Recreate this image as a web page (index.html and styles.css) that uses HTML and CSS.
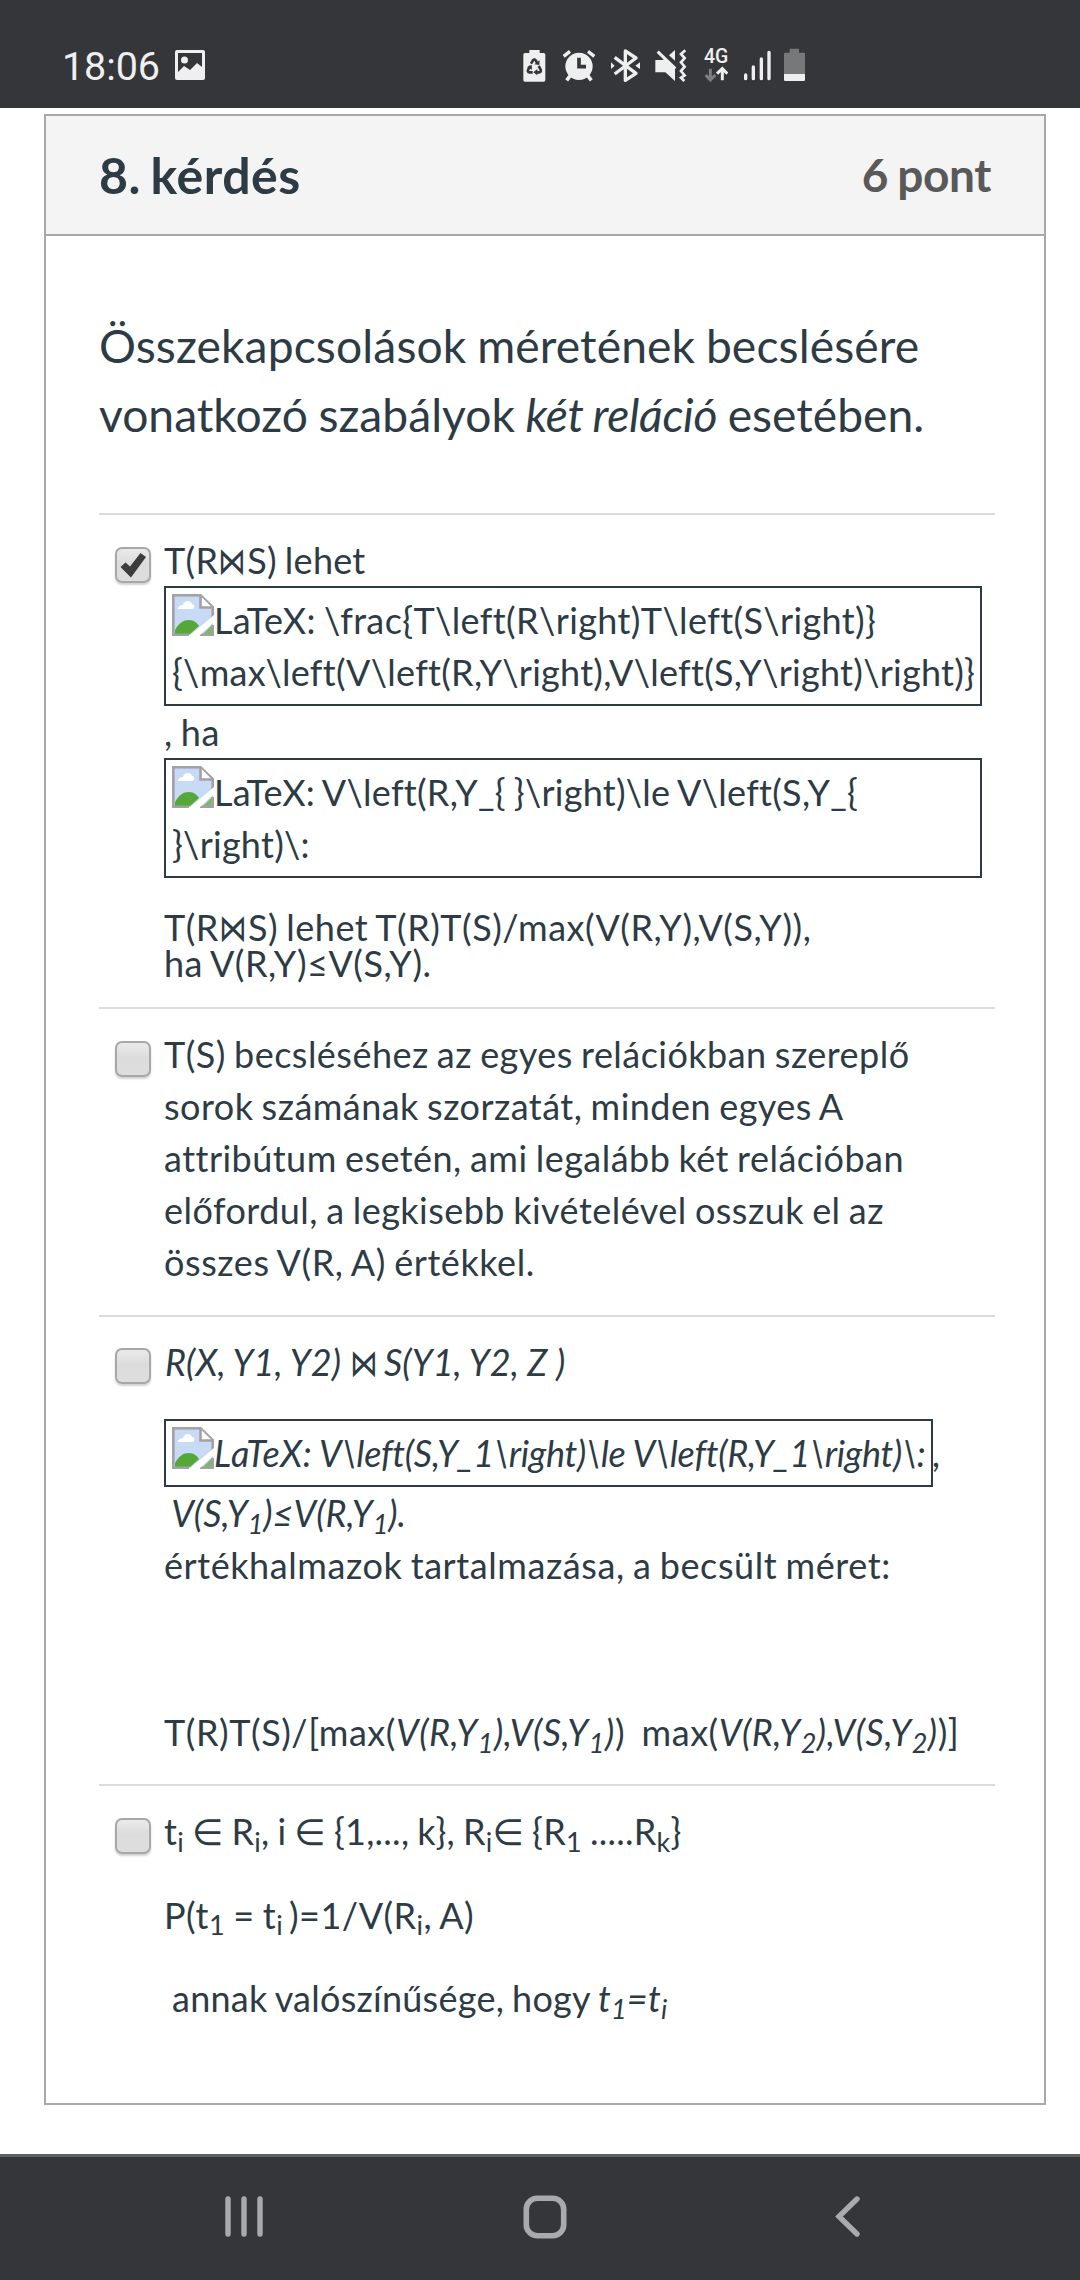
FILE: index.html
```html
<!DOCTYPE html>
<html lang="hu">
<head>
<meta charset="utf-8">
<title>8. kérdés</title>
<link rel="stylesheet" href="styles.css">
</head>
<body>
<svg class="defs" width="0" height="0" aria-hidden="true">
  <symbol id="broken" viewBox="0 0 42 42">
    <path d="M1 1H29L41 13V41H1Z" fill="#c6d7f3"/>
    <path d="M3 4H28V14H39V22L14 39H3Z" fill="#c9daf6"/>
    <path d="M6 15c0-3 3-4 5-4 1-5 8-5 9-1 3 0 3 5 0 5Z" fill="#fff"/>
    <path d="M3 39V36C7 29 11 26 17 26c5 0 8 3 10 6L18 40H3Z" fill="#54a838"/>
    <path d="M30 41L40 31V41Z" fill="#7cb868"/>
    <path d="M1.3 41V1.3H28.5L40.7 13V25" fill="none" stroke="#a2a2a2" stroke-width="2.6"/>
    <path d="M28.5 2V13.5H40" fill="#fff" stroke="#a2a2a2" stroke-width="2.6"/>
    <path d="M0 40.7H17M28 40.7H40.7V31" fill="none" stroke="#a2a2a2" stroke-width="2.6"/>
    <path d="M42 21V28L27 42H17Z" fill="#fff"/>
  </symbol>
</svg>

<header class="status">
  <span class="clock">18:06</span>
  <svg class="photo" width="32" height="32" viewBox="0 0 32 32"><path fill="#efeff0" fill-rule="evenodd" d="M3 1H29a2 2 0 0 1 2 2V29a2 2 0 0 1-2 2H3a2 2 0 0 1-2-2V3a2 2 0 0 1 2-2ZM4 4V23L10 17L16 21L23 14L28 18V4Z"/><circle cx="10.500" cy="11" r="3.500" fill="#efeff0"/></svg>
  <div class="indicators">
    <svg width="24" height="36" viewBox="69 84 72 108"><path fill="#efeff0" d="M88 90h31v9h12q5 0 5 5v76q0 5-5 5H75q-5 0-5-5v-76q0-5 5-5h13Z"/><g fill="none" stroke="#353639" stroke-width="8"><path d="M93 131L99 121Q103 116 107 121L112 130"/><path d="M116 138L122 149Q124 156 117 157H107"/><path d="M98 157H89Q81 156 85 148L91 138"/></g><path fill="#353639" d="M103 133l15 2 1-14ZM112 147v19l-12-9ZM81 142l14-8 1 15Z"/></svg>
    <svg width="36" height="36" viewBox="183 84 108 108"><circle cx="237" cy="139" r="41" fill="#efeff0"/><path d="M191 109L210 94M283 109L264 94" stroke="#efeff0" stroke-width="10"/><path d="M211 167L200 181M263 167L274 181" stroke="#efeff0" stroke-width="11"/><path d="M237 113V140H258" fill="none" stroke="#353639" stroke-width="11"/></svg>
    <svg width="33" height="36" viewBox="327 84 99 108"><path fill="none" stroke="#efeff0" stroke-width="10" stroke-linejoin="round" d="M344 112L408 160L376 181V93L408 114L344 162"/><path fill="#efeff0" d="M333 127l11 10-11 10ZM420 127l-14 10 14 10Z"/></svg>
    <svg width="35" height="36" viewBox="462 84 105 108"><path fill="#efeff0" d="M466 120h20l10-3 29 27v39l-29-26h-30ZM507 106L525 90V122Z"/><path stroke="#efeff0" stroke-width="9" d="M473 95L526 146"/><path fill="none" stroke="#efeff0" stroke-width="8" d="M556 91L543 102L554 114L543 127L554 140L543 153L554 166L543 173L553 183"/></svg>
    <div class="net"><span>4G</span><svg width="24" height="17" viewBox="612 140 72 51"><path fill="none" stroke="#7d7e80" stroke-width="9" d="M631 148V182M617 167L631 182L646 167"/><path fill="none" stroke="#efeff0" stroke-width="9" d="M667 183V149M651 163L667 148L682 163"/></svg></div>
    <svg width="29" height="36" viewBox="726 84 87 108"><path stroke="#efeff0" stroke-width="10" stroke-linecap="round" d="M734 165V176M757 141V176M781 117V176M804 97V176"/></svg>
    <svg width="21" height="36" viewBox="852 84 63 108"><path fill="#77787a" d="M869 86h28v12h15q3 0 3 4v60H852V102q0-4 4-4h13Z"/><path fill="#efeff0" d="M852 162h63v17q0 4-4 4H856q-4 0-4-4Z"/></svg>
  </div>
</header>

<main class="page">
  <section class="card">
    <div class="card-head"><h1>8. kérdés</h1><span class="points">6 pont</span></div>
    <div class="card-body">
      <p class="question">Összekapcsolások méretének becslésére<br><span class="second">vonatkozó szabályok <i>két reláció</i> esetében.</span></p>

      <div class="answer">
        <span class="check"><svg width="36" height="36" viewBox="0 0 36 36"><path fill="#3c3c3c" d="M5.500 20L10.500 15.500L15 19.500L25.500 6L31 10L16 30.500Z"/></svg></span>
        <div class="text">
          <p class="snug">T(R<span class="join">⋈</span>S) lehet</p>
          <div class="alt"><svg class="broken"><use href="#broken"/></svg><span class="fraction">LaTeX: \frac{T\left(R\right)T\left(S\right)}</span><br><span class="snug">{\max\left(V\left(R,Y\right),V\left(S,Y\right)\right)}</span></div>
          <p>, ha</p>
          <div class="alt snug"><svg class="broken"><use href="#broken"/></svg>LaTeX: V\left(R,Y_{ }\right)\le V\left(S,Y_{<br>}\right)\:</div>
          <p class="tight">T(R<span class="join">⋈</span>S) lehet T(R)T(S)/max(V(R,Y),V(S,Y)),<br>ha V(R,Y)≤V(S,Y).</p>
        </div>
      </div>

      <div class="answer plain">
        <span class="check"></span>
        <div class="text">
          <p>T(S) becsléséhez az egyes relációkban szereplő<br>sorok számának szorzatát, minden egyes A<br>attribútum esetén, ami legalább két relációban<br>előfordul, a legkisebb kivételével osszuk el az<br><span class="wide">összes V(R, A) értékkel.</span></p>
        </div>
      </div>

      <div class="answer relations">
        <span class="check"></span>
        <div class="text">
          <p class="schema"><i>R(X, Y1, Y2) </i><span class="join">⋈</span><i> S(Y1, Y2, Z )</i></p>
          <div class="formula"><div class="alt single"><svg class="broken"><use href="#broken"/></svg><span class="wide">LaTeX:</span> V\left(S,Y_1\right)\le V\left(R,Y_1\right)\:</div><i>,</i></div>
          <p class="natural"><i>&nbsp;V(S,Y<sub>1</sub>)≤V(R,Y<sub>1</sub>).</i></p>
          <p class="wide">értékhalmazok tartalmazása, a becsült méret:</p>
          <p class="estimate">T(R)T(S)/[max(<i>V(R,Y<sub>1</sub>),V(S,Y<sub>1</sub>)</i>)&nbsp; max(<i>V(R,Y<sub>2</sub>),V(S,Y<sub>2</sub>)</i>)]</p>
        </div>
      </div>

      <div class="answer probability">
        <span class="check"></span>
        <div class="text">
          <p class="snug">t<sub>i</sub> ∈ R<sub>i</sub>, i ∈ {1,..., k}, R<sub>i</sub>∈ {R<sub>1</sub> .....R<sub>k</sub>}</p>
          <p>P(t<sub>1</sub> = t<sub>i </sub>)=1/V(R<sub>i</sub>, A)</p>
          <p class="snug">&nbsp;annak valószínűsége, hogy <i>t<sub>1</sub>=t<sub>i</sub></i></p>
        </div>
      </div>
    </div>
  </section>
</main>

<nav class="navbar">
  <svg width="38" height="44" viewBox="0 0 38 44"><path d="M3 4V39M19 4V39M35 4V39" stroke="#a9aaac" stroke-width="5.400" stroke-linecap="round"/></svg>
  <svg class="home" width="44" height="44" viewBox="0 0 44 44"><rect x="3.300" y="3.300" width="37.400" height="37.400" rx="11" fill="none" stroke="#a9aaac" stroke-width="5.600"/></svg>
  <svg width="26" height="44" viewBox="0 0 26 44"><path d="M22 4L4 21.500L22 39" fill="none" stroke="#a9aaac" stroke-width="5.400" stroke-linecap="round"/></svg>
</nav>
</body>
</html>
```
FILE: styles.css
```css
* { box-sizing: border-box; }
body {
  margin: 0;
  width: 1080px;
  height: 2280px;
  display: flex;
  flex-direction: column;
  overflow: hidden;
  background: #fff;
  color: #2d3b45;
  font-family: Lato, "DejaVu Sans", sans-serif;
}
h1, p { margin: 0; font-weight: inherit; }
svg { display: block; flex: none; }
.defs { position: absolute; }

.status {
  display: flex;
  align-items: flex-start;
  height: 108px;
  flex: none;
  padding-left: 62px;
  background: #353639;
  color: #efeff0;
  font-family: Roboto, sans-serif;
}
.clock { width: 112px; padding-top: 43px; font-size: 39.500px; line-height: 47px; letter-spacing: -.1px; white-space: nowrap; }
.photo { margin-top: 49px; }
.indicators { display: flex; gap: 12px; margin: 48px 0 0 317px; }
.indicators svg:first-child { margin-right: 2px; }
.net { width: 27px; margin: 0 1px 0 2px; padding-left: 1px; }
.net span { display: block; height: 18px; font-size: 19.500px; line-height: 18px; font-weight: 500; }

.page { flex: 1; padding: 6px 34px 0 44px; }
.card { height: 1991px; border: 2px solid #a7a8a9; }
.card-head {
  display: flex;
  justify-content: space-between;
  align-items: center;
  height: 120px;
  padding: 0 53px;
  background: #f4f4f4;
  border-bottom: 2px solid #a7a8a9;
  font-weight: 700;
}
.card-head h1 { font-size: 50px; line-height: 60px; letter-spacing: .5px; word-spacing: -3px; }
.points { color: #595959; font-size: 46px; line-height: 56px; letter-spacing: -.4px; word-spacing: -1.500px; }
.card-body { padding: 75px 49px 0 53px; }
.question {
  height: 202px;
  font-size: 46.200px;
  line-height: 69.300px;
  letter-spacing: .12px;
  word-spacing: -1.200px;
  white-space: nowrap;
}
.second { letter-spacing: 0; }
.second i { letter-spacing: -.3px; word-spacing: -1.500px; }

.answer { display: flex; height: 494px; padding-top: 19px; border-top: 2px solid #dcdcdc; }
.answer.plain { height: 308px; }
.answer.relations { height: 469px; }
.answer.probability { height: 317px; }
.check {
  flex: none;
  width: 36px;
  height: 36px;
  margin: 13px 13px 0 16px;
  border-radius: 7px;
  background: linear-gradient(#ececec, #dcdcdc 45%, #dedede);
  box-shadow: inset 0 0 0 2px #a8a8a8, 0 2px 2px rgba(0, 0, 0, .18);
}
.relations .check { margin-top: 12px; }
.text { font-size: 36px; line-height: 52px; letter-spacing: .47px; word-spacing: -1.500px; white-space: nowrap; }
.snug { letter-spacing: .26px; }
.fraction { letter-spacing: .38px; }
.wide { letter-spacing: .58px; }
.natural { letter-spacing: 0; word-spacing: 0; }
.alt { width: 818px; height: 120px; padding: 6px; border: 2px solid #2d3b45; }
.broken { display: inline-block; width: 42px; height: 42px; vertical-align: -2px; margin: -4px 0 0 0; }
.tight { padding-top: 31px; line-height: 36.300px; letter-spacing: .5px; }
.join {
  display: inline-block;
  width: 29px;
  line-height: 36px;
  letter-spacing: 0;
  transform: scale(.77, 1.05);
  transform-origin: 0 30px;
}
.schema { padding-left: 1px; letter-spacing: .05px; word-spacing: 0; }
.schema .join { width: 26px; }
.formula { display: flex; padding-top: 31px; }
.formula > i { padding-top: 8px; }
.alt.single { width: 769px; height: 68px; font-style: italic; letter-spacing: -.25px; word-spacing: 0; }
.estimate { padding-top: 115px; letter-spacing: .54px; }
.probability p + p { padding-top: 31.500px; }
sub { font-size: 75%; line-height: 0; vertical-align: baseline; position: relative; bottom: -.25em; }

.navbar {
  display: flex;
  flex: none;
  height: 126px;
  padding: 38px 219px 0 225px;
  justify-content: space-between;
  background: #353639;
  border-top: 3px solid #5c6064;
}
.home { margin-right: 8px; }
```
